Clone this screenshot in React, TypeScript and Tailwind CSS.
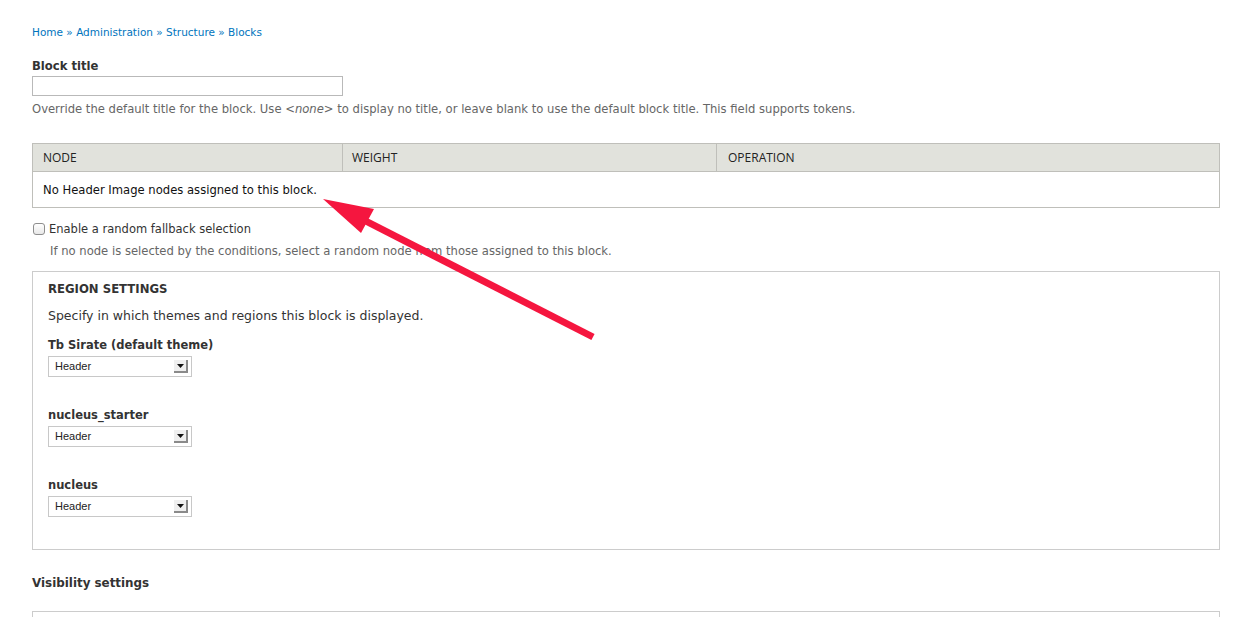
import React from 'react';

const FONT = "font-['DejaVu_Sans','Liberation_Sans',sans-serif]";

const FakeSelect: React.FC<{ value: string }> = ({ value }) => {
  return (
    <div className="mt-[3px] flex h-[21px] w-[144px] items-center justify-between border border-[#c8c8c8] bg-white pl-[6px] pr-[3px]">
      <span className="font-['Liberation_Sans',Arial,sans-serif] text-[11px] text-[#222]">{value}</span>
      <span className="flex h-[13px] w-[14px] items-center justify-center border-r-2 border-b-2 border-[#8a8a8a] bg-[#efefef]">
        <svg width="7" height="4" viewBox="0 0 7 4">
          <path d="M0 0 L7 0 L3.5 4 Z" fill="#111" />
        </svg>
      </span>
    </div>
  );
};

const RegionField: React.FC<{ label: string; gap: string }> = ({ label, gap }) => (
  <div className={gap}>
    <div className="text-[11.5px] font-bold leading-[16px] text-[#333]">{label}</div>
    <FakeSelect value="Header" />
  </div>
);

const App: React.FC = () => {
  return (
    <div className={`relative min-h-[617px] overflow-hidden bg-white pl-[32px] pr-[22px] pt-[24px] ${FONT} text-[#333]`}>
      {/* breadcrumb */}
      <div className="text-[10.5px] leading-[16px] text-[#0074bd]">
        <a>Home</a> » <a>Administration</a> » <a>Structure</a> » <a>Blocks</a>
      </div>

      {/* block title */}
      <div className="mt-[18px] text-[11.6px] font-bold leading-[16px]">Block title</div>
      <div className="mt-[2px] h-[20px] w-[311px] border border-[#b9b9b9] bg-white" />
      <div className="mt-[5px] text-[11.6px] leading-[16px] text-[#666]">
        Override the default title for the block. Use <em>&lt;none&gt;</em> to display no title, or leave blank to use the default block title. This field supports tokens.
      </div>

      {/* table */}
      <div className="mt-[26px] border border-[#bfbfba]">
        <div className="flex h-[27px] items-center bg-[#e1e2dc] font-['Open_Sans',sans-serif] text-[12px] text-[#222]">
          <div className="flex h-full w-[310px] items-center border-r border-[#bfbfba] pl-[10px]">NODE</div>
          <div className="flex h-full w-[374px] items-center border-r border-[#bfbfba] pl-[9px]">WEIGHT</div>
          <div className="flex h-full flex-1 items-center pl-[11px]">OPERATION</div>
        </div>
        <div className="flex h-[36px] items-center border-t border-[#bfbfba] pl-[10px] pt-[2px] text-[11.6px] text-[#111]">
          No Header Image nodes assigned to this block.
        </div>
      </div>

      {/* checkbox */}
      <div className="mt-[13px] flex h-[16px] items-center text-[11.5px] leading-[16px]">
        <span className="ml-[1px] mr-[4px] h-[12px] w-[12px] rounded-[3px] border border-[#8e8e8e] bg-gradient-to-b from-white to-[#e8e8e8]" />
        <span>Enable a random fallback selection</span>
      </div>
      <div className="mt-[6px] pl-[18px] text-[11.6px] leading-[16px] text-[#666]">
        If no node is selected by the conditions, select a random node from those assigned to this block.
      </div>

      {/* region settings */}
      <div className="mt-[12px] border border-[#ccc] px-[15px] pt-[9px] pb-[32px]">
        <div className="text-[11.7px] font-bold uppercase leading-[16px]">Region settings</div>
        <div className="mt-[11px] text-[12.5px] leading-[16px]">Specify in which themes and regions this block is displayed.</div>
        <RegionField label="Tb Sirate (default theme)" gap="mt-[13px]" />
        <RegionField label="nucleus_starter" gap="mt-[30px]" />
        <RegionField label="nucleus" gap="mt-[30px]" />
      </div>

      <div className="mt-[25px] text-[11.9px] font-bold leading-[16px]">Visibility settings</div>
      <div className="mt-[20px] h-[40px] border border-[#ccc]" />

      {/* annotation arrow */}
      <svg className="pointer-events-none absolute left-0 top-0" width="1242" height="617" viewBox="0 0 1242 617">
        <line x1="593" y1="337" x2="350" y2="213" stroke="#f5163f" strokeWidth="7" />
        <polygon points="323,199 374,209 361,233" fill="#f5163f" />
      </svg>
    </div>
  );
};

export default App;
